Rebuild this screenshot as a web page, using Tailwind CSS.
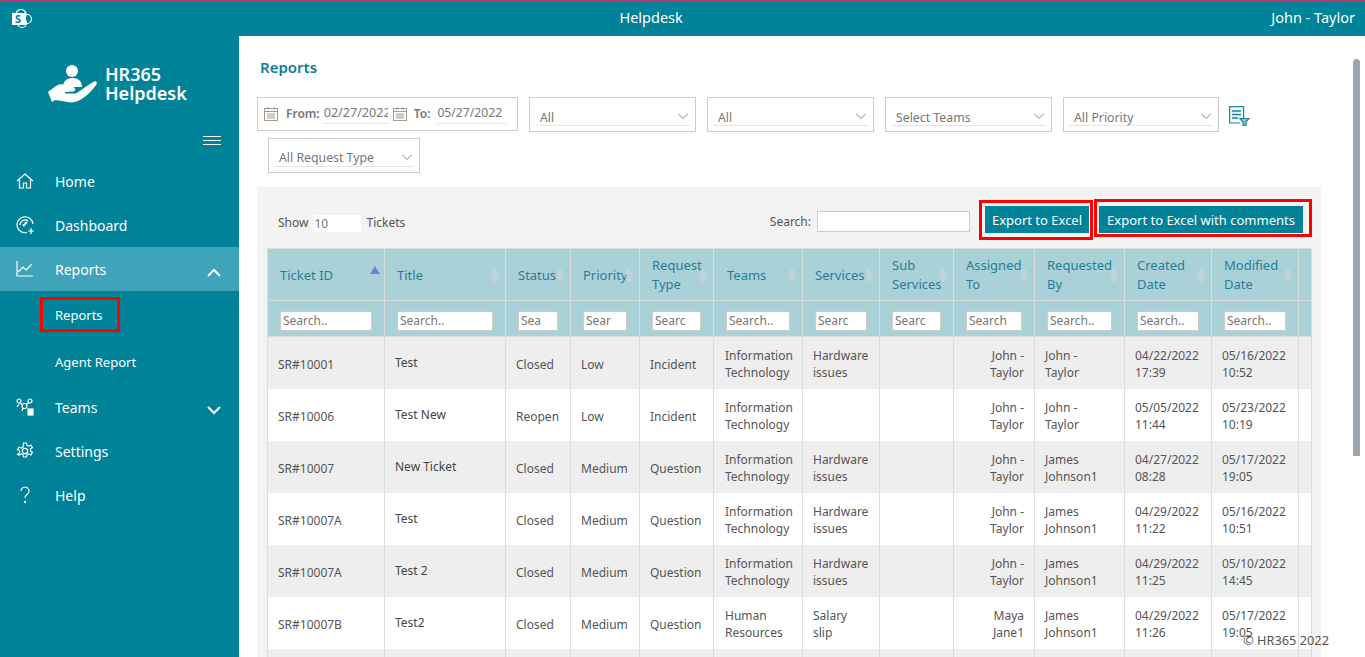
<!DOCTYPE html>
<html lang="en">
<head>
  <meta charset="UTF-8" />
  <title>Helpdesk</title>
  <script src="https://cdn.jsdelivr.net/npm/@tailwindcss/browser@4"></script>
</head>
<body class="h-[657px] overflow-hidden bg-white font-['Noto_Sans','Open_Sans',sans-serif] text-[13px] text-[#555]">

  <!-- Top bar -->
  <header class="relative h-9 bg-[#008299] border-t-2 border-[#b83b6e] flex items-center justify-between pl-[11px] pr-[10px] pb-[3px] text-white">
    <svg class="mt-[3px]" width="22" height="20" viewBox="0 0 22 20" fill="none">
      <circle cx="10" cy="5.500" r="5" stroke="white" stroke-width="1.200"/>
      <circle cx="16" cy="10" r="4.500" stroke="white" stroke-width="1.200"/>
      <circle cx="11" cy="14" r="4.500" stroke="white" stroke-width="1.200"/>
      <rect x="1" y="4" width="14" height="12" fill="white"/>
      <text x="4" y="14" font-size="11" font-weight="700" fill="#008299">S</text>
    </svg>
    <div class="text-[14.500px] ml-[-2px]">Helpdesk</div>
    <div class="text-[14.500px]">John - Taylor</div>
  </header>

  <div class="flex h-[621px]">
    <!-- Sidebar -->
    <aside class="w-[239px] shrink-0 bg-[#008299] text-white text-[14px]">
      <div class="h-[92px] pt-[28px] pl-[47px] flex items-start gap-[8px]">
        <svg width="50" height="40" viewBox="0 0 50 40" fill="white">
          <circle cx="25" cy="7" r="6"/>
          <path d="M16 23c0-6 4-9 9.500-9s9.500 3 9.500 9z"/>
          <path d="M1 28L9 22C12 20 15 20 18 21L26 23C29 24 29 27 26 27.500L18 28L18 29.500L29 29.500L46 18C49 16 51 19 49 21C44 28 36 36 28 38C24 39 20 38 15 37L8 36L5 38Z"/>
        </svg>
        <div class="text-[18px] leading-[19px] font-semibold pt-[1px]">HR365<br>Helpdesk</div>
      </div>
      <div class="flex justify-end pr-[18px] h-[32px] pt-[8px]">
        <div class="w-[18px] h-[9px] border-y border-white flex items-center"><div class="w-full h-px bg-white"></div></div>
      </div>
      <nav class="mt-[-1px]">
        <a class="flex items-center h-11 pl-[16px] gap-[21px]">
          <svg class="w-[18px] h-[18px]" viewBox="0 0 18 18" fill="none" stroke="white" stroke-width="1.200"><path d="M1 9l8-7 8 7M3.500 7.500V16h4v-5h3v5h4V7.500"/></svg>
          <span>Home</span>
        </a>
        <a class="flex items-center h-11 pl-[16px] gap-[21px]">
          <svg class="w-[18px] h-[18px]" viewBox="0 0 18 18" fill="none" stroke="white" stroke-width="1.200"><path d="M11 16.500A8 8 0 1 1 17 8"/><path d="M4 9a5 5 0 0 1 8-4"/><path d="M7 10l4-4" stroke-width="2"/><path d="M15 12v6M12 15h6"/></svg>
          <span>Dashboard</span>
        </a>
        <a class="flex items-center h-11 pl-[16px] gap-[21px] bg-[#3fa3b9]">
          <svg class="w-[18px] h-[18px]" viewBox="0 0 18 18" fill="none" stroke="white" stroke-width="1.200"><path d="M1 1v15h16"/><path d="M2 12l5-5 3 3 6-6"/></svg>
          <span>Reports</span>
          <svg class="ml-auto mr-[18px] mt-[6px] w-[14px] h-[9px]" viewBox="0 0 14 9" fill="none" stroke="white" stroke-width="2"><path d="M1 8l6-6 6 6"/></svg>
        </a>
        <div class="h-[47px] pl-[40px] flex items-center">
          <span class="border-[3px] border-[#f00] h-[35px] w-[80px] flex items-center pl-[12px] pt-[2px] text-[13px]">Reports</span>
        </div>
        <div class="h-[47px] pl-[55px] pt-[2px] flex items-center text-[13px]">Agent Report</div>
        <a class="flex items-center h-11 pl-[16px] gap-[21px]">
          <svg class="w-[18px] h-[18px]" viewBox="0 0 18 18" fill="none" stroke="white" stroke-width="1.200"><circle cx="3" cy="3" r="2"/><circle cx="14" cy="3" r="2"/><circle cx="8.500" cy="8" r="2.500"/><path d="M4 5l3 2M13 5l-3 1M1 9l2-3M6 13l1-3"/><rect x="12" y="11" width="5" height="6" fill="white"/></svg>
          <span>Teams</span>
          <svg class="ml-auto mr-[18px] mt-[6px] w-[14px] h-[9px]" viewBox="0 0 14 9" fill="none" stroke="white" stroke-width="2"><path d="M1 1l6 6 6-6"/></svg>
        </a>
        <a class="flex items-center h-11 pl-[16px] gap-[21px]">
          <svg class="w-[18px] h-[18px]" viewBox="0 0 18 18" fill="none" stroke="white" stroke-width="1.200"><circle cx="9" cy="9" r="2.700"/><path d="M7.500 1h3l.5 2.400 1.700.8 2.200-1.200 1.500 2.500-1.900 1.600v1.800l1.900 1.600-1.500 2.500-2.200-1.200-1.700.8-.5 2.400h-3l-.5-2.400-1.700-.8-2.200 1.200L1.600 12.500l1.900-1.600V9.100L1.600 7.500l1.500-2.500 2.200 1.200 1.700-.8z"/></svg>
          <span>Settings</span>
        </a>
        <a class="flex items-center h-11 pl-[16px] gap-[21px]">
          <svg class="w-[18px] h-[18px]" viewBox="0 0 18 18" fill="none" stroke="white" stroke-width="1.200"><path d="M5 5a4 4 0 1 1 6 3.500c-1.500 1-2 1.700-2 3.500"/><circle cx="9" cy="16" r=".6" fill="white"/></svg>
          <span>Help</span>
        </a>
      </nav>
    </aside>

    <!-- Main -->
    <main class="relative flex-1 pl-[18px] pr-[44px] min-w-0 overflow-hidden">
      <h1 class="h-[61px] pt-[20px] pl-[3px] text-[15px] font-semibold text-[#0f7f98]">Reports</h1>

      <!-- Filters -->
      <div class="flex flex-wrap gap-x-[11px] gap-y-[6px] text-[12.300px] text-[#777]">
        <div class="w-[261px] h-[34px] border border-[#ccc] flex items-center pl-[6px]">
          <svg class="w-[14px] h-[14px] shrink-0" viewBox="0 0 14 14" fill="none" stroke="#a89a8a"><rect x=".5" y="1.500" width="13" height="12"/><path d="M.5 4.500h13M3 7h8M3 9h8M3 11h8M4 0v3M10 0v3"/></svg>
          <b class="ml-[8px] font-semibold text-[12px]">From:</b>
          <span class="ml-[4px] w-[64px] overflow-hidden border-b border-[#e5e5e5] whitespace-nowrap text-[12.600px]">02/27/2022</span>
          <svg class="ml-[5px] w-[14px] h-[14px] shrink-0" viewBox="0 0 14 14" fill="none" stroke="#a89a8a"><rect x=".5" y="1.500" width="13" height="12"/><path d="M.5 4.500h13M3 7h8M3 9h8M3 11h8M4 0v3M10 0v3"/></svg>
          <b class="ml-[7px] font-semibold text-[12px]">To:</b>
          <span class="ml-[7px] w-[70px] border-b border-[#e5e5e5] whitespace-nowrap text-[12.200px]">05/27/2022</span>
        </div>
        <div class="w-[167px] h-[35px] border border-[#ccc] px-[5px] pt-[10px]"><div class="flex items-center justify-between border-b border-[#e5e5e5] pl-[5px] pt-[4px] h-[18px]">All<svg class="w-[10px] h-[6px] mr-[2px] mb-[6px]" viewBox="0 0 10 6" fill="none" stroke="#888"><path d="M0 .5l5 5 5-5"/></svg></div></div>
        <div class="w-[167px] h-[35px] border border-[#ccc] px-[5px] pt-[10px]"><div class="flex items-center justify-between border-b border-[#e5e5e5] pl-[5px] pt-[4px] h-[18px]">All<svg class="w-[10px] h-[6px] mr-[2px] mb-[6px]" viewBox="0 0 10 6" fill="none" stroke="#888"><path d="M0 .5l5 5 5-5"/></svg></div></div>
        <div class="w-[167px] h-[35px] border border-[#ccc] px-[5px] pt-[10px]"><div class="flex items-center justify-between border-b border-[#e5e5e5] pl-[5px] pt-[4px] h-[18px]">Select Teams<svg class="w-[10px] h-[6px] mr-[2px] mb-[6px]" viewBox="0 0 10 6" fill="none" stroke="#888"><path d="M0 .5l5 5 5-5"/></svg></div></div>
        <div class="w-[156px] h-[35px] border border-[#ccc] px-[5px] pt-[10px]"><div class="flex items-center justify-between border-b border-[#e5e5e5] pl-[5px] pt-[4px] h-[18px]">All Priority<svg class="w-[10px] h-[6px] mr-[2px] mb-[6px]" viewBox="0 0 10 6" fill="none" stroke="#888"><path d="M0 .5l5 5 5-5"/></svg></div></div>
        <svg class="w-[21px] h-[20px] ml-[-1px] mt-[9px]" viewBox="0 0 21 20" fill="none" stroke="#1f87a0" stroke-width="1.200"><path d="M11 17H.6V.6h14V12" fill="#eef6f8"/><path d="M3 5h9M3 8.500h9M3 12h6" stroke-width="1.400"/><path d="M11 12.500h9l-3 3.500v3.500h-3V16z" fill="#7fc3d2"/></svg>
        <div class="w-[152px] h-[35px] ml-[11px] border border-[#ccc] px-[5px] pt-[10px]"><div class="flex items-center justify-between border-b border-[#e5e5e5] pl-[5px] pt-[2px] h-[18px]">All Request Type<svg class="w-[10px] h-[6px] mr-[2px] mb-[4px]" viewBox="0 0 10 6" fill="none" stroke="#888"><path d="M0 .5l5 5 5-5"/></svg></div></div>
      </div>

      <!-- Table panel -->
      <section class="mt-[14px] bg-[#f3f3f3] px-[10px] h-[500px]">
        <div class="h-[61px] flex items-start text-[12px] text-[#555]">
          <div class="flex items-center mt-[27px] ml-[11px]">
            Show
            <span class="ml-[5px] w-[48px] h-[17px] bg-white text-[#777] leading-[17px] pl-[1px]">10</span>
            <span class="ml-[5px]">Tickets</span>
          </div>
          <div class="ml-auto flex items-center mt-[24px]">Search:
            <span class="ml-[6px] w-[153px] h-[21px] bg-white border border-[#ccc]"></span>
          </div>
          <div class="mt-[13px] ml-[9px] border-[3px] border-[#f00] pt-[3px] pb-[4px] pl-[3px] pr-[1px]">
            <button class="block w-[104px] h-[27px] pt-[2px] bg-[#008299] text-white text-[13px] whitespace-nowrap">Export to Excel</button>
          </div>
          <div class="mt-[12px] ml-[1px] mr-[-1px] border-[3px] border-[#f00] pt-[4px] pb-[1px] pl-[2px] pr-[6px]">
            <button class="block w-[204px] h-[27px] pt-[2px] bg-[#008299] text-white text-[13px] whitespace-nowrap">Export to Excel with comments</button>
          </div>
        </div>

        <table class="table-fixed w-[1044px] border-collapse text-[12px]">
          <colgroup>
            <col class="w-[117px]"><col class="w-[121px]"><col class="w-[65px]"><col class="w-[69px]"><col class="w-[74px]"><col class="w-[89px]"><col class="w-[77px]"><col class="w-[74px]"><col class="w-[81px]"><col class="w-[90px]"><col class="w-[87px]"><col class="w-[87px]"><col class="w-[13px]">
          </colgroup>
          <thead id="head" class="bg-[#abd1d8] text-[#1f7f98] text-[13px] font-normal"></thead>
          <tbody id="body"></tbody>
        </table>
      </section>

      <!-- Fake scrollbar -->
      <div class="absolute right-[5px] top-[23px] w-[7px] h-[397px] rounded-t bg-[#9aa5ad]"></div>
      <div class="absolute right-[36px] bottom-[7px] text-[12.800px] text-[#555]">© HR365 2022</div>
    </main>
  </div>

  <script>
    const cols = [
      ['Ticket ID', 'Search..', 'sorted'], ['Title', 'Search..'], ['Status', 'Sea'], ['Priority', 'Sear'],
      ['Request Type', 'Searc'], ['Teams', 'Search..'], ['Services', 'Searc'], ['Sub Services', 'Searc'],
      ['Assigned To', 'Search'], ['Requested By', 'Search..'], ['Created Date', 'Search..'], ['Modified Date', 'Search..'], ['', '']
    ];
    const rows = [
      ['SR#10001','Test','Closed','Low','Incident','Information Technology','Hardware issues','','John - Taylor','John -<br>Taylor','04/22/2022 17:39','05/16/2022 10:52'],
      ['SR#10006','Test New','Reopen','Low','Incident','Information Technology','','','John - Taylor','John -<br>Taylor','05/05/2022 11:44','05/23/2022 10:19'],
      ['SR#10007','New Ticket','Closed','Medium','Question','Information Technology','Hardware issues','','John - Taylor','James Johnson1','04/27/2022 08:28','05/17/2022 19:05'],
      ['SR#10007A','Test','Closed','Medium','Question','Information Technology','Hardware issues','','John - Taylor','James Johnson1','04/29/2022 11:22','05/16/2022 10:51'],
      ['SR#10007A','Test 2','Closed','Medium','Question','Information Technology','Hardware issues','','John - Taylor','James Johnson1','04/29/2022 11:25','05/10/2022 14:45'],
      ['SR#10007B','Test2','Closed','Medium','Question','Human Resources','Salary<br>slip','','Maya Jane1','James Johnson1','04/29/2022 11:26','05/17/2022 19:05'],
      ['','','','','','','','','','','','']
    ];
    const arrows = s => s
      ? '<span class="absolute right-[4px] top-[17px] w-0 h-0 border-x-[5px] border-x-transparent border-b-[8px] border-b-[#7b7bd6]"></span>'
      : '<span class="absolute right-[6px] top-[19px] w-0 h-0 border-x-[4px] border-x-transparent border-b-[7px] border-b-[#c4d5da]"></span><span class="absolute right-[6px] top-[27px] w-0 h-0 border-x-[4px] border-x-transparent border-t-[7px] border-t-[#c4d5da]"></span>';

    document.getElementById('head').innerHTML =
      '<tr class="h-[52px]">' + cols.map((c, j) =>
        `<th class="relative border border-[#dcdcdc] ${j === 5 ? 'pl-[13px]' : 'pl-[12px]'} pr-0 pt-[1px] text-left font-normal leading-[19px]">${c[0]}${c[0] ? arrows(c[2]) : ''}</th>`
      ).join('') + '</tr>' +
      '<tr class="h-[36px]">' + cols.map(c =>
        `<th class="border border-[#dcdcdc] pl-[12px] pr-[12px] pt-[4px] text-left font-normal">${c[1] ? `<div class="h-[20px] bg-white border border-[#ccc] pl-[2px] text-[12px] leading-[18px] text-[#777] overflow-hidden whitespace-nowrap">${c[1]}</div>` : ''}</th>`
      ).join('') + '</tr>';

    document.getElementById('body').innerHTML = rows.map((r, i) =>
      `<tr class="h-[52px] ${i % 2 ? 'bg-white' : 'bg-[#eee]'}">` + r.map((v, j) => {
        let cls = 'pl-[10px] pr-[6px] pt-[2px]';
        if (j === 0 || j > 1 && j < 5) cls = 'pl-[10px] pr-[6px] pt-[4px]';
        if (j === 5) cls = 'pl-[11px] pr-[6px] pt-[2px]';
        if (j === 8) cls = 'pl-[6px] pr-[10px] pt-[2px] text-right';
        if (j === 1) cls = 'pl-[10px] pr-[6px] text-[#444] pb-[1px]';
        return `<td class="border-x border-[#dcdcdc] leading-[17px] ${cls}">${v}</td>`;
      }).join('') + '<td class="border-x border-[#dcdcdc]"></td></tr>'
    ).join('');
  </script>
</body>
</html>
